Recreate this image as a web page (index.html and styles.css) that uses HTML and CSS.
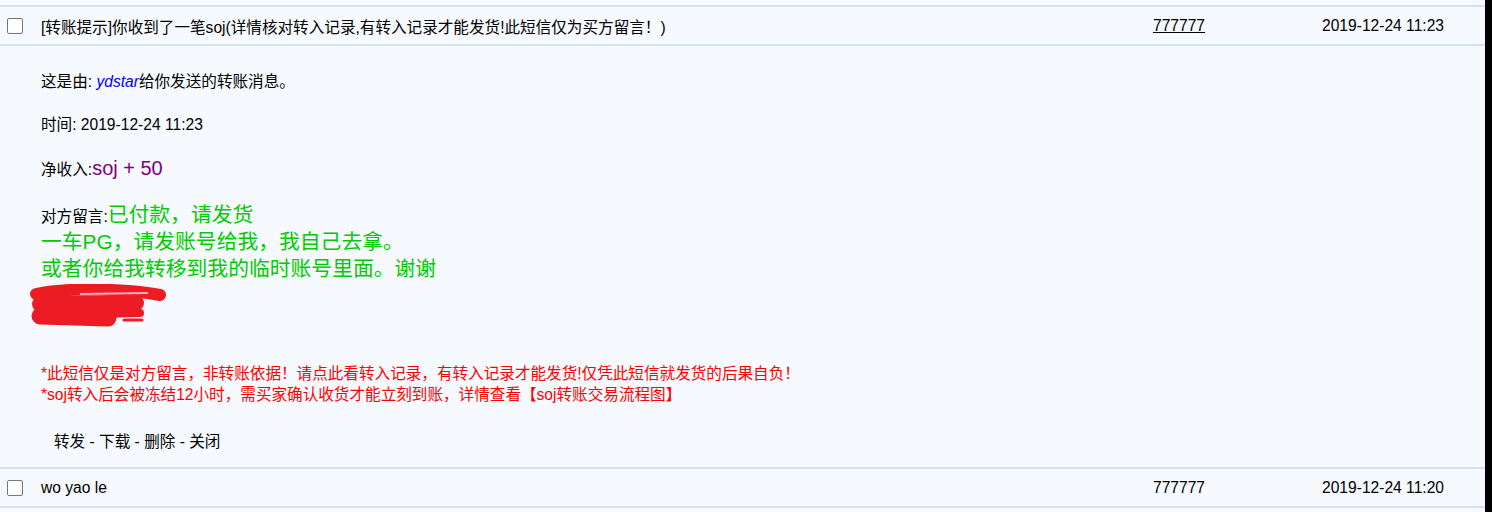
FILE: index.html
```html
<!DOCTYPE html>
<html lang="zh-CN">
<head>
<meta charset="UTF-8">
<title>短消息</title>
<link rel="stylesheet" href="styles.css">
</head>
<body>
<div class="page">
    <div class="inbox">
        <div class="msg-row">
            <div class="cell-check"><span class="check"></span></div>
            <div class="subject">[转账提示]你收到了一笔soj(详情核对转入记录,有转入记录才能发货!此短信仅为买方留言！)</div>
            <div class="sender"><a href="#">777777</a></div>
            <div class="date">2019-12-24 11:23</div>
        </div>

        <div class="msg-detail">
            <p class="line">这是由: <a class="user" href="#">ydstar</a>给你发送的转账消息。</p>
            <p class="line">时间: 2019-12-24 11:23</p>
            <p class="line">净收入:<span class="amount">soj + 50</span></p>
            <p class="note">对方留言:<span class="green">已付款，请发货<br>一车PG，请发账号给我，我自己去拿。<br>或者你给我转移到我的临时账号里面。谢谢</span></p>
            <svg class="scribble" width="150" height="46" viewBox="0 0 150 46">
                <g fill="none" stroke="#ed1c24" stroke-linecap="round" stroke-linejoin="round">
                    <path d="M8 10 C 40 3, 100 5, 132 11" stroke-width="12"/>
                    <path d="M12 20 L 108 19" stroke-width="16"/>
                    <path d="M12 32 L 80 34" stroke-width="17"/>
                    <path d="M70 30 L 112 29" stroke-width="8"/>
                    <path d="M96 36 L 114 36" stroke-width="3"/>
                </g>
                <path d="M52 10 L 120 9" stroke="#f7b0b8" stroke-width="2" fill="none"/>
            </svg>
            <p class="warn">*此短信仅是对方留言，非转账依据！请点此看转入记录，有转入记录才能发货!仅凭此短信就发货的后果自负！<br>*soj转入后会被冻结12小时，需买家确认收货才能立刻到账，详情查看【soj转账交易流程图】</p>
            <p class="actions"><a href="#">转发</a> - <a href="#">下载</a> - <a href="#">删除</a> - <a href="#">关闭</a></p>
        </div>

        <div class="msg-row">
            <div class="cell-check"><span class="check"></span></div>
            <div class="subject">wo yao le</div>
            <div class="sender">777777</div>
            <div class="date">2019-12-24 11:20</div>
        </div>
        <div class="msg-end"></div>
    </div>
    <div class="edge"></div>
</div>
</body>
</html>
```

FILE: styles.css
```css
body {
    margin: 0;
    background-color: #f6f9fe;
    font-family: "Liberation Sans", "Noto Sans CJK SC", sans-serif;
    font-size: 15.6px;
    color: #000;
}

a {
    color: #000;
}

.page {
    display: flex;
    height: 512px;
}

.inbox {
    flex: 1;
    padding-top: 5px;
}

.edge {
    width: 7px;
    background-color: #000;
}

.msg-row {
    display: grid;
    grid-template-columns: 41px 1fr 204px 204px;
    align-items: center;
    height: 37px;
    border-top: 2px solid #d5e1ed;
}

.cell-check {
    padding-left: 7px;
    display: flex;
}

.check {
    width: 14px;
    height: 14px;
    border: 1px solid #767676;
    border-radius: 2px;
    background-color: #fff;
}

.sender,
.date {
    text-align: center;
}

.msg-end {
    border-top: 2px solid #d5e1ed;
}

.msg-detail {
    border-top: 2px solid #d5e1ed;
    padding: 26px 0 15px 41px;
}

.msg-detail p {
    margin: 0;
}

.line {
    line-height: 20px;
    margin-bottom: 23px !important;
}

.user {
    color: #0000ff;
    font-style: italic;
    text-decoration: none;
}

.amount {
    color: #800080;
    font-size: 20px;
}

.note {
    line-height: 27px;
}

.green {
    color: #00cc00;
    font-size: 20.8px;
    line-height: 20px;
}

.scribble {
    display: block;
    margin: 0 0 0 -13px;
}

.warn {
    margin-top: 33px !important;
    color: #ff0000;
    font-size: 15.6px;
    line-height: 21px;
}

.actions {
    margin-top: 27px !important;
    padding-left: 13px;
    line-height: 20px;
}

.actions a {
    text-decoration: none;
}
```
